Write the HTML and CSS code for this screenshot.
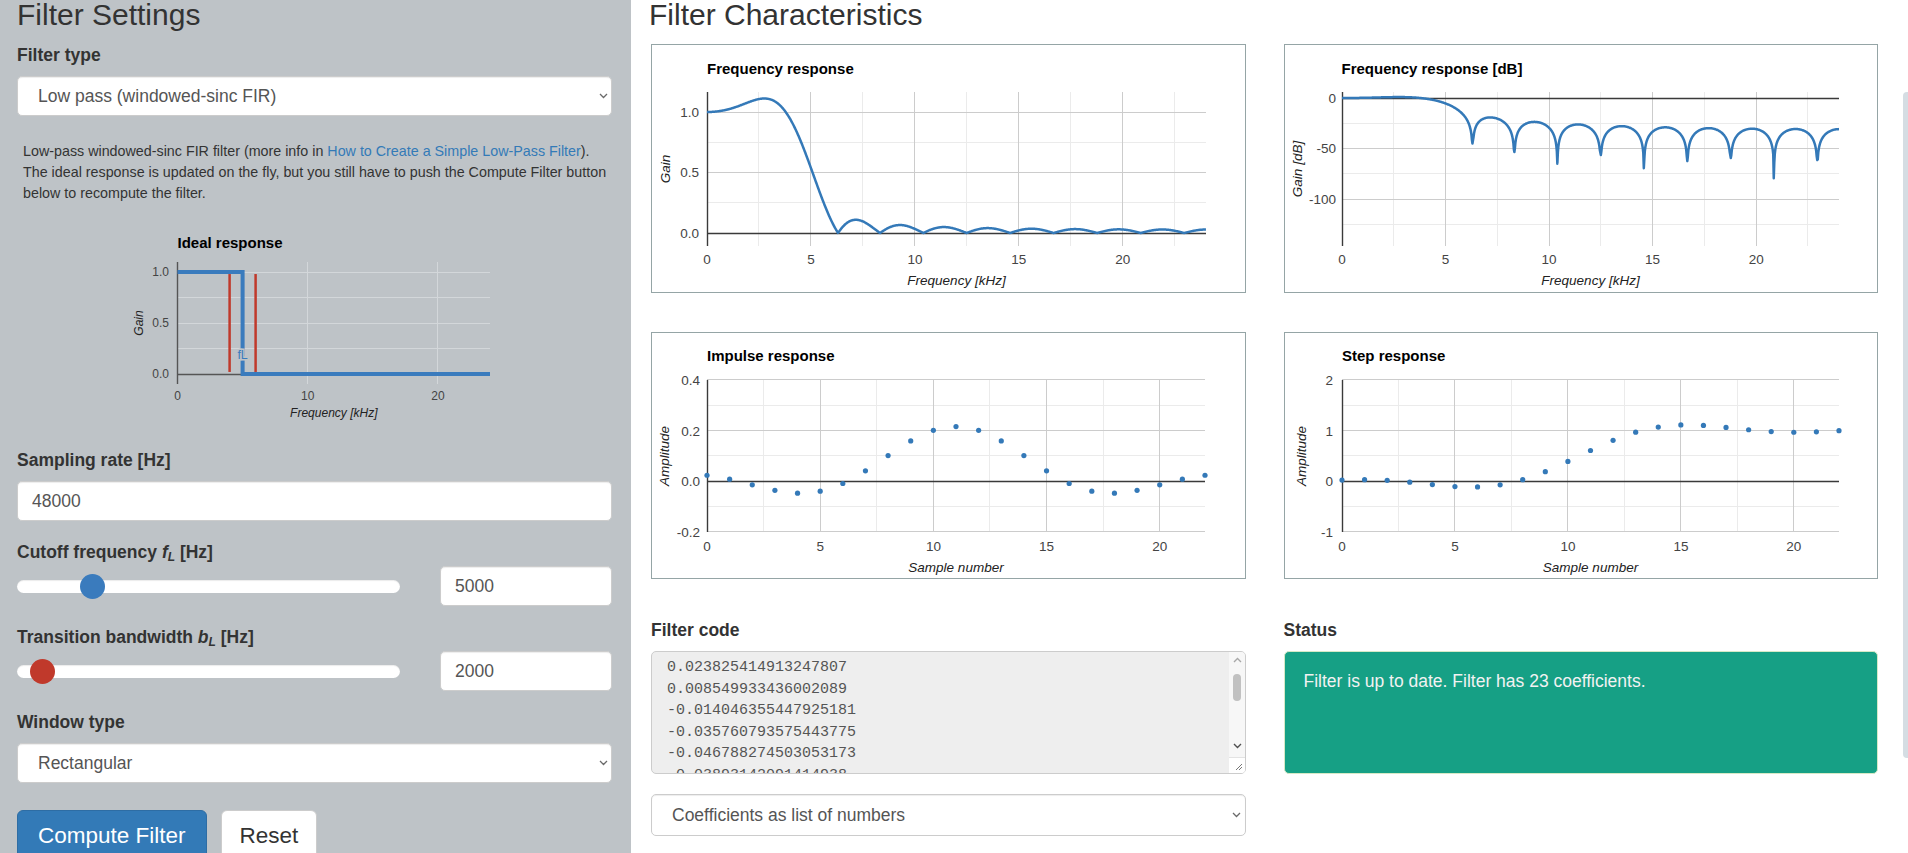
FILE: index.html
```html
<!DOCTYPE html>
<html lang="en">
<head>
<meta charset="utf-8">
<title>Filter Designer</title>
<link rel="stylesheet" href="styles.css">
</head>
<body>
<div class="app">
  <aside class="settings">
    <h2 class="heading">Filter Settings</h2>
    <div class="group group-first">
      <label class="lbl" for="filter-type">Filter type</label>
      <div class="select-wrap">
        <select id="filter-type" class="control">
          <option selected>Low pass (windowed-sinc FIR)</option>
          <option>High pass (windowed-sinc FIR)</option>
          <option>Band pass (windowed-sinc FIR)</option>
          <option>Band reject (windowed-sinc FIR)</option>
        </select>
        <svg class="chev" width="9" height="6" viewBox="0 0 9 6" aria-hidden="true"><polyline points="1,1 4.5,4.5 8,1"/></svg>
      </div>
    </div>
    <p class="desc">Low-pass windowed-sinc FIR filter (more info in <a href="#">How to Create a Simple Low-Pass Filter</a>). <span>The ideal response is updated on the fly, but you still have to push the Compute Filter button below to recompute the filter.</span></p>
    <svg id="chart-ideal" class="chart ideal" width="595" height="244" viewBox="0 0 595 244"></svg>
    <div class="group">
      <label class="lbl" for="fs">Sampling rate [Hz]</label>
      <input id="fs" class="control" type="text" value="48000">
    </div>
    <div class="group slider-group">
      <label class="lbl" for="fc">Cutoff frequency <i>f<sub>L</sub></i> [Hz]</label>
      <div class="slider-row">
        <input class="range range-blue" type="range" min="0" max="1000" value="176" aria-label="Cutoff frequency slider">
        <input id="fc" class="control num" type="text" value="5000">
      </div>
    </div>
    <div class="group slider-group">
      <label class="lbl" for="bw">Transition bandwidth <i>b<sub>L</sub></i> [Hz]</label>
      <div class="slider-row">
        <input class="range range-red" type="range" min="0" max="1000" value="36" aria-label="Transition bandwidth slider">
        <input id="bw" class="control num" type="text" value="2000">
      </div>
    </div>
    <div class="group group-last">
      <label class="lbl" for="win">Window type</label>
      <div class="select-wrap">
        <select id="win" class="control">
          <option selected>Rectangular</option>
          <option>Blackman</option>
          <option>Hamming</option>
        </select>
        <svg class="chev" width="9" height="6" viewBox="0 0 9 6" aria-hidden="true"><polyline points="1,1 4.5,4.5 8,1"/></svg>
      </div>
    </div>
    <div class="buttons">
      <button class="btn btn-primary" type="button">Compute Filter</button>
      <button class="btn btn-default" type="button">Reset</button>
    </div>
  </aside>

  <main class="main">
    <h2 class="heading">Filter Characteristics</h2>
    <div class="charts">
      <div class="card"><svg id="chart-freq" class="chart" width="592" height="247" viewBox="0 0 592 247"></svg></div>
      <div class="card"><svg id="chart-db" class="chart" width="592" height="247" viewBox="0 0 592 247"></svg></div>
      <div class="card"><svg id="chart-imp" class="chart" width="592" height="245" viewBox="0 0 592 245"></svg></div>
      <div class="card"><svg id="chart-step" class="chart" width="592" height="245" viewBox="0 0 592 245"></svg></div>
    </div>
    <div class="bottom">
      <div class="col">
        <label class="lbl" for="code">Filter code</label>
        <div class="code-wrap">
          <textarea id="code" class="code" readonly>0.023825414913247807
0.008549933436002089
-0.014046355447925181
-0.035760793575443775
-0.046788274503053173
-0.03893142091414938
-0.008623714839447268
0.04129310345689742
0.10173288712437706
0.15954391254640513
0.20110047620289052
0.21621004432604227
0.20110047620289052
0.15954391254640513
0.10173288712437706
0.04129310345689742
-0.008623714839447268
-0.03893142091414938
-0.046788274503053173
-0.035760793575443775
-0.014046355447925181
0.008549933436002089
0.023825414913247807</textarea>
          <div class="fake-scroll" aria-hidden="true">
            <svg class="arrow arrow-up" width="9" height="6" viewBox="0 0 9 6"><polyline points="1,5 4.5,1.5 8,5"/></svg>
            <div class="thumb"></div>
            <svg class="arrow arrow-down" width="9" height="6" viewBox="0 0 9 6"><polyline points="1,1 4.5,4.5 8,1"/></svg>
            <div class="grip"><svg width="9" height="9" viewBox="0 0 9 9"><line x1="8" y1="2" x2="2" y2="8"/><line x1="8" y1="5" x2="5" y2="8"/></svg></div>
          </div>
        </div>
        <div class="select-wrap code-format-wrap">
          <select class="control code-format" aria-label="Code format">
            <option selected>Coefficients as list of numbers</option>
            <option>C code</option>
            <option>Python code</option>
          </select>
          <svg class="chev" width="9" height="6" viewBox="0 0 9 6" aria-hidden="true"><polyline points="1,1 4.5,4.5 8,1"/></svg>
        </div>
      </div>
      <div class="col">
        <div class="lbl">Status</div>
        <div class="status">Filter is up to date. Filter has 23 coefficients.</div>
      </div>
    </div>
  </main>
</div>
<div class="edge-bar" aria-hidden="true"></div>
<script src="script.js"></script>
</body>
</html>
```

FILE: styles.css
```css
html, body {
  margin: 0;
  padding: 0;
  overflow: hidden;
  height: 100%;
}

body {
  font-family: "Liberation Sans", Arial, sans-serif;
  font-size: 17.5px;
  line-height: 25px;
  color: #333;
  background: #fff;
  position: relative;
}

.app {
  display: flex;
  height: 853px;
}

.settings {
  flex: 0 0 631px;
  box-sizing: border-box;
  padding: 0 19px 0 17px;
  background: #bec3c7;
}

.main {
  flex: 1;
  box-sizing: border-box;
  padding: 0 30px 0 20px;
  background: #fff;
}

.heading {
  margin: 0;
  font-size: 30px;
  line-height: 29px;
  font-weight: normal;
  color: #333;
}

.settings .heading {
  margin-bottom: 14px;
}

.main .heading {
  margin-left: -2px;
  margin-bottom: 15px;
}

.lbl {
  display: block;
  font-weight: bold;
  font-size: 17.5px;
  line-height: 25px;
  margin-bottom: 8px;
  color: #333;
}

.lbl sub {
  font-size: 12px;
  line-height: 0;
  vertical-align: -3px;
}

.group {
  margin-bottom: 19px;
}

.group-first {
  margin-bottom: 0;
}

.group-last {
  margin-bottom: 27px;
}

.slider-group .lbl {
  margin-bottom: 1px;
}

.control {
  display: block;
  box-sizing: border-box;
  width: 100%;
  height: 40px;
  margin: 0;
  padding: 0 14px;
  font-family: "Liberation Sans", Arial, sans-serif;
  font-size: 17.5px;
  color: #555;
  background: #fff;
  border: 1px solid #ccc;
  border-radius: 5px;
  box-shadow: inset 0 1px 1px rgba(0, 0, 0, 0.075);
  outline: none;
}

.select-wrap {
  position: relative;
}

select.control {
  -webkit-appearance: none;
  appearance: none;
  padding-left: 20px;
  padding-right: 24px;
}

.chev {
  position: absolute;
  right: 4px;
  top: 50%;
  margin-top: -3px;
  fill: none;
  stroke: #6a6a6a;
  stroke-width: 1.3;
  pointer-events: none;
}

.desc {
  margin: 25px 0 0 6px;
  font-size: 14.3px;
  line-height: 21px;
  color: #333;
}

.desc a {
  color: #337ab7;
  text-decoration: none;
}

.chart {
  display: block;
  font-family: "Liberation Sans", Arial, sans-serif;
}

.slider-row {
  display: flex;
  align-items: center;
  justify-content: space-between;
  height: 40px;
}

.control.num {
  width: 172px;
  flex: 0 0 172px;
}

.range {
  -webkit-appearance: none;
  appearance: none;
  width: 383px;
  height: 25px;
  margin: 0;
  padding: 0;
  background: transparent;
}

.range::-webkit-slider-runnable-track {
  height: 13px;
  background: #fff;
  border-radius: 7px;
  box-shadow: inset 0 1px 1px rgba(0, 0, 0, 0.08);
}

.range::-webkit-slider-thumb {
  -webkit-appearance: none;
  appearance: none;
  width: 25px;
  height: 25px;
  margin-top: -6px;
  border: none;
  border-radius: 50%;
  background: #3a7bbd;
}

.range-red::-webkit-slider-thumb {
  background: #c0392b;
}

.buttons {
  display: flex;
  gap: 14px;
}

.btn {
  font-family: "Liberation Sans", Arial, sans-serif;
  font-size: 22.5px;
  line-height: 30px;
  padding: 10px 20px 14px;
  border-radius: 6px;
  border: 1px solid transparent;
  cursor: pointer;
}

.btn-primary {
  color: #fff;
  background: #337ab7;
  border-color: #2e6da4;
}

.btn-default {
  color: #333;
  background: #fff;
  border-color: #ccc;
  padding-left: 18px;
  padding-right: 18px;
}

/* charts grid */
.charts {
  display: grid;
  grid-template-columns: 1fr 1fr;
  column-gap: 38px;
  row-gap: 39px;
}

.card {
  border: 1px solid #95a5a6;
  background: #fff;
}

.g-minor {
  stroke: #ebebeb;
  stroke-width: 1;
}

.g-major {
  stroke: #cccccc;
  stroke-width: 1;
}

.g-base {
  stroke: #3a3a3a;
  stroke-width: 1.4;
}

.ideal .g-minor,
.ideal .g-major {
  stroke: #d3d7da;
}

.ideal .g-base {
  stroke: #555;
}

.s-line {
  fill: none;
  stroke: #3479b8;
  stroke-width: 2.5;
  stroke-linejoin: round;
}

.s-dot {
  fill: #3479b8;
}

.s-ideal {
  fill: none;
  stroke: #3a7bbd;
  stroke-width: 4;
}

.s-edge {
  stroke: #c0392b;
  stroke-width: 2.5;
}

.c-title {
  font-weight: bold;
  font-size: 15px;
  fill: #000;
}

.c-tick {
  font-size: 13.5px;
  fill: #444;
}

.c-axis {
  font-size: 13.5px;
  font-style: italic;
  fill: #222;
}

.ideal .c-tick,
.ideal .c-axis {
  font-size: 12px;
}

.c-fl {
  font-size: 12.5px;
  fill: #3a7bbd;
  stroke: #bec3c7;
  stroke-width: 3px;
  paint-order: stroke;
}

/* bottom area */
.bottom {
  display: grid;
  grid-template-columns: 1fr 1fr;
  column-gap: 38px;
  margin-top: 39px;
}

.code-wrap {
  position: relative;
  height: 123px;
}

.code {
  display: block;
  box-sizing: border-box;
  width: 100%;
  height: 123px;
  margin: 0;
  padding: 5px 32px 5px 15px;
  font-family: "Liberation Mono", "Courier New", monospace;
  font-size: 15px;
  line-height: 21.5px;
  color: #555;
  background: #eee;
  border: 1px solid #ccc;
  border-radius: 5px;
  resize: none;
  overflow: hidden;
  outline: none;
}

.fake-scroll {
  position: absolute;
  top: 1px;
  right: 1px;
  bottom: 1px;
  width: 16px;
  background: #f7f7f7;
  border-radius: 0 4px 4px 0;
}

.arrow {
  position: absolute;
  left: 4px;
  fill: none;
  stroke-width: 1.4;
}

.arrow-up {
  top: 5px;
  stroke: #a8a8a8;
}

.arrow-down {
  top: 91px;
  stroke: #505050;
}

.thumb {
  position: absolute;
  top: 22px;
  left: 4px;
  width: 8px;
  height: 27px;
  border-radius: 4px;
  background: #c1c1c1;
}

.grip {
  position: absolute;
  left: 0;
  right: 0;
  bottom: 0;
  height: 15px;
  border-top: 1px solid #e3e3e3;
  background: #fff;
  border-radius: 0 0 4px 0;
}

.grip svg {
  position: absolute;
  right: 2px;
  bottom: 2px;
  stroke: #777;
  stroke-width: 1;
}

.code-format-wrap {
  margin-top: 20px;
}

.code-format {
  height: 42px;
  padding-left: 19px;
}

.code-format-wrap .chev {
  right: 5px;
}

.status {
  box-sizing: border-box;
  height: 123px;
  padding: 17px 19px;
  font-size: 17.5px;
  line-height: 25px;
  color: #f2f2f2;
  background: #16a085;
  border: 1px solid #d6e9c6;
  border-radius: 5px;
}

.edge-bar {
  position: absolute;
  top: 92px;
  right: 0;
  width: 5px;
  height: 666px;
  background: #d5dde3;
  border-radius: 4px 0 0 4px;
}
```

FILE: script.js
```js
(function () {
  'use strict';
  var NS = 'http://www.w3.org/2000/svg';

  function add(parent, tag, attrs, text) {
    var e = document.createElementNS(NS, tag);
    for (var k in attrs) {
      if (Object.prototype.hasOwnProperty.call(attrs, k)) e.setAttribute(k, attrs[k]);
    }
    if (text !== undefined) e.textContent = text;
    parent.appendChild(e);
    return e;
  }

  function px(v) { return Math.round(v - 0.5) + 0.5; }

  /* ---- filter design: low-pass windowed sinc, rectangular window ---- */
  var fs = 48000, fc = 5000 / fs, N = 23, M = (N - 1) / 2;
  var h = [], sum = 0, n;
  for (n = 0; n < N; n++) {
    var x = 2 * fc * (n - M);
    var v = x === 0 ? 1 : Math.sin(Math.PI * x) / (Math.PI * x);
    h.push(v);
    sum += v;
  }
  h = h.map(function (c) { return c / sum; });
  var step = [], acc = 0;
  h.forEach(function (c) { acc += c; step.push(acc); });

  function mag(f) {
    var re = 0, im = 0;
    for (var k = 0; k < N; k++) {
      var w = 2 * Math.PI * f * k / fs;
      re += h[k] * Math.cos(w);
      im -= h[k] * Math.sin(w);
    }
    return Math.sqrt(re * re + im * im);
  }

  var freqPts = [], dbVals = [], fList = [];
  var STEP_HZ = 25;
  for (var i = 0; i <= 24000 / STEP_HZ; i++) {
    var f = i * STEP_HZ;
    var m = mag(f);
    fList.push(f / 1000);
    freqPts.push([f / 1000, m]);
    dbVals.push(20 * Math.log(Math.max(m, 1e-9)) / Math.LN10);
  }

  var depths = [-45, -53.5, -65, -56.5, -69.5, -62.5, -59.5, -79.5, -61.5];
  var mins = [];
  for (i = 1; i < dbVals.length - 1; i++) {
    if (dbVals[i] < -30 && dbVals[i] < dbVals[i - 1] && dbVals[i] <= dbVals[i + 1]) mins.push(i);
  }
  var drop = {};
  mins.forEach(function (idx, k) {
    var t = depths[k];
    if (t === undefined) return;
    for (var j = idx - 20; j <= idx + 20; j++) {
      if (j < 0 || j >= dbVals.length || j === idx) continue;
      if (dbVals[j] < t) drop[j] = true;
    }
    dbVals[idx] = t;
  });
  var dbPts = [];
  for (i = 0; i < dbVals.length; i++) {
    if (!drop[i]) dbPts.push([fList[i], Math.max(dbVals[i], -146)]);
  }

  var impPts = h.map(function (c, k) { return [k, c]; });
  var stepPts = step.map(function (c, k) { return [k, c]; });

  function drawChart(id, c) {
    var svg = document.getElementById(id);
    if (!svg) return;
    var X = function (v) { return c.xa + c.xb * v; };
    var Y = function (v) { return c.ya - c.yb * v; };
    var L = c.rect[0], T = c.rect[1], R = c.rect[2], B = c.rect[3];
    var grid = add(svg, 'g', {});
    function vline(v, cls) { var xx = px(X(v)); add(grid, 'line', { x1: xx, x2: xx, y1: T, y2: B, 'class': cls }); }
    function hline(v, cls) { var yy = px(Y(v)); add(grid, 'line', { x1: L, x2: R, y1: yy, y2: yy, 'class': cls }); }
    (c.vMinor || []).forEach(function (v) { vline(v, 'g-minor'); });
    (c.hMinor || []).forEach(function (v) { hline(v, 'g-minor'); });
    (c.vMajor || []).forEach(function (v) { vline(v, 'g-major'); });
    (c.hMajor || []).forEach(function (v) { hline(v, 'g-major'); });

    var y0 = px(Y(0));
    add(svg, 'line', { x1: L, x2: R, y1: y0, y2: y0, 'class': 'g-base' });
    var x0 = px(L);
    add(svg, 'line', { x1: x0, x2: x0, y1: T, y2: B, 'class': 'g-base' });

    if (c.line) {
      var d = c.line.map(function (p, k) {
        return (k ? 'L' : 'M') + X(p[0]).toFixed(2) + ' ' + Y(p[1]).toFixed(2);
      }).join('');
      add(svg, 'path', { d: d, 'class': 's-line' });
    }
    if (c.dots) {
      c.dots.forEach(function (p) {
        add(svg, 'circle', { cx: X(p[0]).toFixed(2), cy: Y(p[1]).toFixed(2), r: 2.6, 'class': 's-dot' });
      });
    }
    if (c.extra) c.extra(svg, X, Y);

    add(svg, 'text', { x: c.title[1], y: c.title[2], 'class': 'c-title' }, c.title[0]);
    c.xTicks.forEach(function (v) {
      add(svg, 'text', { x: X(v).toFixed(1), y: c.xTickY, 'class': 'c-tick', 'text-anchor': 'middle' }, String(v));
    });
    c.yTicks.forEach(function (v) {
      add(svg, 'text', { x: c.yTickX, y: (Y(v) + c.fsz * 0.36).toFixed(1), 'class': 'c-tick', 'text-anchor': 'end' }, c.yFmt(v));
    });
    add(svg, 'text', { x: ((L + R) / 2).toFixed(1), y: c.xTitleY, 'class': 'c-axis', 'text-anchor': 'middle' }, c.xTitle);
    var yc = ((T + B) / 2).toFixed(1), xc = (c.yTitleX + c.fsz * 0.36).toFixed(1);
    add(svg, 'text', { x: xc, y: yc, transform: 'rotate(-90 ' + xc + ' ' + yc + ')', 'class': 'c-axis', 'text-anchor': 'middle' }, c.yTitle);
  }

  function f1(v) { return v.toFixed(1); }
  function f0(v) { return String(v); }

  /* ideal response (sidebar) */
  drawChart('chart-ideal', {
    xa: 160.5, xb: 13.02, ya: 170, yb: 102,
    rect: [160.5, 58, 473, 180],
    vMajor: [10, 20],
    hMinor: [0.25, 0.75],
    hMajor: [0.5, 1.0],
    title: ['Ideal response', 160.5, 44],
    xTicks: [0, 10, 20], xTickY: 195.5,
    yTicks: [1, 0.5, 0], yTickX: 152, yFmt: f1,
    xTitle: 'Frequency [kHz]', xTitleY: 213,
    yTitle: 'Gain', yTitleX: 122,
    fsz: 12,
    extra: function (svg, X, Y) {
      add(svg, 'path', {
        d: 'M' + X(0) + ' ' + Y(1) + 'H' + X(5).toFixed(1) + 'V' + Y(0) + 'H' + X(24).toFixed(1),
        'class': 's-ideal'
      });
      [4, 6].forEach(function (k) {
        add(svg, 'line', { x1: X(k).toFixed(1), x2: X(k).toFixed(1), y1: Y(0.98), y2: Y(0.02), 'class': 's-edge' });
      });
      add(svg, 'text', { x: X(5).toFixed(1), y: Y(0.15).toFixed(1), 'class': 'c-fl', 'text-anchor': 'middle' }, 'fL');
    }
  });

  drawChart('chart-freq', {
    xa: 55, xb: 20.79, ya: 188, yb: 121,
    rect: [55, 47, 554, 201],
    vMinor: [2.5, 7.5, 12.5, 17.5, 22.5],
    vMajor: [5, 10, 15, 20],
    hMinor: [0.25, 0.75],
    hMajor: [0.5, 1.0],
    line: freqPts,
    title: ['Frequency response', 55, 29],
    xTicks: [0, 5, 10, 15, 20], xTickY: 219,
    yTicks: [1, 0.5, 0], yTickX: 47, yFmt: f1,
    xTitle: 'Frequency [kHz]', xTitleY: 239.5,
    yTitle: 'Gain', yTitleX: 13,
    fsz: 13.5
  });

  drawChart('chart-db', {
    xa: 57, xb: 20.708, ya: 53, yb: 1.01,
    rect: [57, 47, 554, 201],
    vMinor: [2.5, 7.5, 12.5, 17.5, 22.5],
    vMajor: [5, 10, 15, 20],
    hMinor: [-25, -75, -125],
    hMajor: [-50, -100],
    line: dbPts,
    title: ['Frequency response [dB]', 56.5, 29],
    xTicks: [0, 5, 10, 15, 20], xTickY: 219,
    yTicks: [0, -50, -100], yTickX: 51, yFmt: f0,
    xTitle: 'Frequency [kHz]', xTitleY: 239.5,
    yTitle: 'Gain [dB]', yTitleX: 12,
    fsz: 13.5
  });

  drawChart('chart-imp', {
    xa: 55, xb: 22.636, ya: 148.3, yb: 253.3,
    rect: [55, 47, 553, 199],
    vMinor: [2.5, 7.5, 12.5, 17.5],
    vMajor: [5, 10, 15, 20],
    hMinor: [0.3, 0.1, -0.1],
    hMajor: [0.4, 0.2, -0.2],
    dots: impPts,
    title: ['Impulse response', 55, 28],
    xTicks: [0, 5, 10, 15, 20], xTickY: 218,
    yTicks: [0.4, 0.2, 0, -0.2], yTickX: 48, yFmt: f1,
    xTitle: 'Sample number', xTitleY: 238.5,
    yTitle: 'Amplitude', yTitleX: 12.5,
    fsz: 13.5
  });

  drawChart('chart-step', {
    xa: 57, xb: 22.59, ya: 148.3, yb: 50.67,
    rect: [57, 47, 554, 199],
    vMinor: [2.5, 7.5, 12.5, 17.5],
    vMajor: [5, 10, 15, 20],
    hMinor: [1.5, 0.5, -0.5],
    hMajor: [2, 1, -1],
    dots: stepPts,
    title: ['Step response', 57, 28],
    xTicks: [0, 5, 10, 15, 20], xTickY: 218,
    yTicks: [2, 1, 0, -1], yTickX: 48, yFmt: f0,
    xTitle: 'Sample number', xTitleY: 238.5,
    yTitle: 'Amplitude', yTitleX: 16.5,
    fsz: 13.5
  });
})();
```
